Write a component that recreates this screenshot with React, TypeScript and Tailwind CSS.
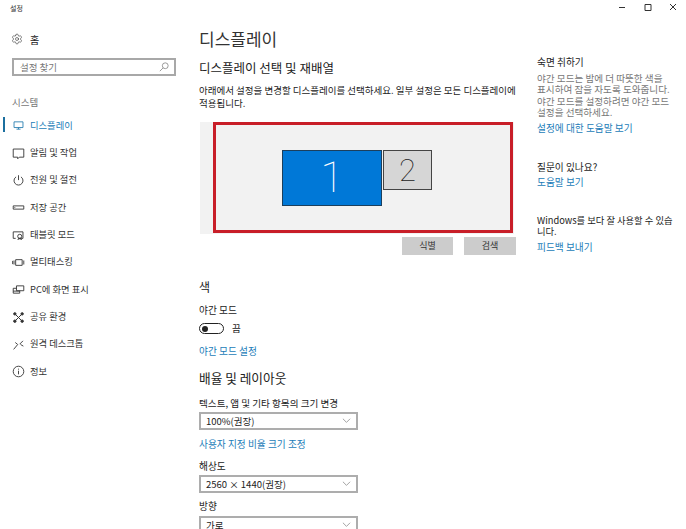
import React from "react";
import { Settings } from "lucide-react";

const font = { fontFamily: '"Noto Sans CJK KR", "Liberation Sans", sans-serif' };

const icons: Record<string, React.ReactNode> = {
  display: <path d="M2.5 3.5h11v7h-11zM8 10.5v2M5.5 12.5h5" stroke="#2a7fb0" />,
  notif: <path d="M1.5 2.5h13v10H9l-2 2v-2H1.5z" />,
  power: <><path d="M8 1.5v6" /><path d="M5 3.5a5.5 5.5 0 1 0 6 0" /></>,
  storage: <path d="M1.5 6h13v4h-13zM3 8h1" />,
  tablet: <><path d="M1.5 3.5h12v8h-6" /><path d="M1.5 3.5v8h3" /><circle cx="9.5" cy="9" r="2.5" /><path d="M7 13.5c.5-2 4.5-2 5 0" /></>,
  multi: <path d="M4.5 4.5h8v7h-8zM2.5 5.5v5M.8 6v4M14.5 5.5v5" />,
  pc: <path d="M5.5 3.5h9v6h-9zM5.5 6.5h-4v6h8V9.5M1.5 10h8" />,
  share: <><path d="M4 4l8 8M12 4l-8 8" strokeWidth="1.2" /><circle cx="3.5" cy="3.5" r="1.5" fill="#333" /><circle cx="12.5" cy="3.5" r="1.5" fill="#333" /><circle cx="3.5" cy="12.5" r="1.5" fill="#333" /><circle cx="12.5" cy="12.5" r="1.5" fill="#333" /></>,
  remote: <path d="M2 14l5-6-3-2.5M9.5 7.5l4-4M10.5 8l3.5 2" />,
  info: <><circle cx="8" cy="8" r="6.5" /><path d="M8 7v4.5M8 4.5v1.2" /></>,
};

const nav: [string, string][] = [
  ["display", "디스플레이"],
  ["notif", "알림 및 작업"],
  ["power", "전원 및 절전"],
  ["storage", "저장 공간"],
  ["tablet", "태블릿 모드"],
  ["multi", "멀티태스킹"],
  ["pc", "PC에 화면 표시"],
  ["share", "공유 환경"],
  ["remote", "원격 데스크톱"],
  ["info", "정보"],
];

const Select = ({ value }: { value: string }) => (
  <div className="w-[159px] h-[18px] shrink-0 border-2 border-[#adadad] flex items-center justify-between pl-[5px] pr-[5px] text-[9.5px] text-[#222]">
    <span>{value}</span>
    <svg width="9" height="6" viewBox="0 0 10 6" fill="none" stroke="#999">
      <path d="M1 .5l4 4 4-4" />
    </svg>
  </div>
);

const Link = ({ children }: { children: React.ReactNode }) => (
  <div className="text-[9.7px] leading-[14px] text-[#1b7cb8]">{children}</div>
);

export default function App() {
  return (
    <div style={font} className="w-[686px] h-[529px] overflow-hidden bg-white flex text-[#222]">
      <aside className="w-[190px] shrink-0 flex flex-col">
        <div className="h-[31px] pl-[10px] pt-[2px] text-[7px] leading-[12px] text-[#333]">설정</div>
        <div className="h-[16px] flex items-center gap-[7px] pl-[11px] text-[10px]">
          <Settings size={12} strokeWidth={1.2} color="#333" className="shrink-0" />
          <span>홈</span>
        </div>
        <div className="mt-[11px] ml-[12px] w-[164px] h-[18px] border-2 border-[#a8a8a8] flex items-center justify-between pl-[6px] pr-[5px] text-[9.5px] text-[#777]">
          <span>설정 찾기</span>
          <svg width="10" height="10" viewBox="0 0 12 12" fill="none" stroke="#888">
            <circle cx="7.5" cy="4.5" r="3.5" />
            <path d="M5 7l-4 4" />
          </svg>
        </div>
        <div className="mt-[19px] pl-[12px] h-[14px] leading-[14px] text-[9.5px] text-[#777]">시스템</div>
        <div className="mt-[3px] flex flex-col">
          {nav.map(([k, label], i) => (
            <div key={k} className={`h-[27.35px] flex items-center text-[9.3px] relative pl-[12px] gap-[5px] ${i === 0 ? "text-[#1b7cb8]" : "text-[#333]"}`}>
              {i === 0 && <div className="absolute left-[3px] top-[5px] w-[2px] h-[15px] bg-[#1b6f9f]" />}
              <svg width="13" height="13" viewBox="0 0 16 16" fill="none" stroke="#333" strokeWidth="1.1" className="shrink-0">
                {icons[k]}
              </svg>
              <span>{label}</span>
            </div>
          ))}
        </div>
      </aside>

      <main className="w-[340px] shrink-0 pl-[9px] flex flex-col">
        <h1 className="mt-[26px] h-[26px] leading-[26px] text-[17px] font-normal text-[#333]">디스플레이</h1>
        <h2 className="mt-[7px] h-[18px] leading-[18px] text-[12.5px] font-normal text-[#222]">디스플레이 선택 및 재배열</h2>
        <p className="mt-[7px] w-[320px] text-[9.5px] leading-[13px] text-[#222]">
          아래에서 설정을 변경할 디스플레이를 선택하세요. 일부 설정은 모든 디스플레이에 적용됩니다.
        </p>
        <div className="mt-[12px] ml-[1px] w-[314px] h-[112px] bg-[#f2f2f2] pl-[13px] shrink-0">
          <div className="w-[300px] h-[111px] border-[3px] border-[#c81e28] pl-[66px] pt-[25px] flex gap-[1px] items-start">
            <div className="w-[100px] h-[56px] bg-[#0078d7] border border-[#1c3f5c] flex items-center justify-center text-white text-[42px] leading-none" style={{ fontFamily: 'Roboto, sans-serif', fontWeight: 100 }}>1</div>
            <div className="w-[49px] h-[40px] bg-[#d6d6d6] border border-[#444] flex items-center justify-center text-[#222] text-[31px] leading-none" style={{ fontFamily: 'Roboto, sans-serif', fontWeight: 100 }}>2</div>
          </div>
        </div>
        <div className="mt-[3px] flex justify-end gap-[11px] w-[317px] shrink-0">
          <div className="w-[51px] h-[18px] bg-[#cccccc] flex items-center justify-center text-[9px] text-[#333]">식별</div>
          <div className="w-[52px] h-[18px] bg-[#cccccc] flex items-center justify-center text-[9px] text-[#333]">검색</div>
        </div>
        <div className="mt-[23px] h-[17px] leading-[17px] text-[12px]">색</div>
        <div className="mt-[8px] h-[14px] leading-[14px] text-[9.7px]">야간 모드</div>
        <div className="mt-[5px] h-[13px] flex items-center gap-[8px] text-[9.5px]">
          <div className="w-[25px] h-[11px] rounded-full border-[1.5px] border-[#222] flex items-center pl-[2px]">
            <div className="w-[6px] h-[6px] rounded-full bg-[#222]" />
          </div>
          <span>끔</span>
        </div>
        <div className="mt-[9px]"><Link>야간 모드 설정</Link></div>
        <h2 className="mt-[10px] h-[19px] leading-[19px] text-[12.7px] font-normal">배율 및 레이아웃</h2>
        <div className="mt-[9px] h-[14px] leading-[14px] text-[9.6px] mb-[2px]">텍스트, 앱 및 기타 항목의 크기 변경</div>
        <Select value="100%(권장)" />
        <div className="mt-[7px]"><Link>사용자 지정 비율 크기 조정</Link></div>
        <div className="mt-[8px] h-[14px] leading-[14px] text-[9.7px] mb-[2px]">해상도</div>
        <Select value="2560 × 1440(권장)" />
        <div className="mt-[6px] h-[14px] leading-[14px] text-[9.7px] mb-[3px]">방향</div>
        <Select value="가로" />
      </main>

      <aside className="flex-1 flex flex-col pl-[7px]">
        <div className="h-[14px] flex justify-end items-center gap-[17.5px] pr-[9px] mb-[41px]">
          <svg width="8" height="8" viewBox="0 0 8 8" stroke="#333"><path d="M1 4.5h6" /></svg>
          <svg width="8" height="8" viewBox="0 0 8 8" fill="none" stroke="#333"><path d="M1 1.5h6v6H1z" /></svg>
          <svg width="8" height="8" viewBox="0 0 8 8" stroke="#333"><path d="M1 1l6 6M7 1l-6 6" /></svg>
        </div>
        <div className="h-[15px] leading-[15px] text-[9.7px] text-[#222]">숙면 취하기</div>
        <p className="mt-[3px] text-[9.6px] leading-[11.4px] text-[#777] whitespace-nowrap">
          야간 모드는 밤에 더 따뜻한 색을<br />표시하여 잠을 자도록 도와줍니다.<br />야간 모드를 설정하려면 야간 모드<br />설정을 선택하세요.
        </p>
        <div className="mt-[2px]"><Link>설정에 대한 도움말 보기</Link></div>
        <div className="mt-[25px] h-[14px] leading-[14px] text-[9.7px]">질문이 있나요?</div>
        <div className="mt-[1px]"><Link>도움말 보기</Link></div>
        <p className="mt-[26px] text-[9.3px] leading-[11.4px] text-[#222] whitespace-nowrap">Windows를 보다 잘 사용할 수 있습<br />니다.</p>
        <div className="mt-[3px]"><Link>피드백 보내기</Link></div>
      </aside>
    </div>
  );
}
